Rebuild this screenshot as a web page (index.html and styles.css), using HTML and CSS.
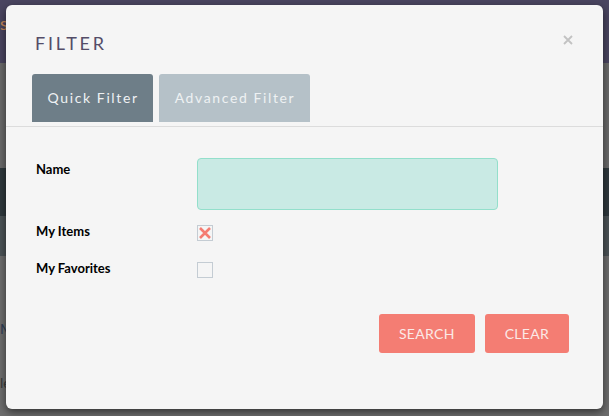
FILE: index.html
```html
<!DOCTYPE html>
<html lang="en">
<head>
<meta charset="utf-8">
<title>Filter</title>
<link rel="stylesheet" href="styles.css">
</head>
<body>
<div class="backdrop">
  <div class="band band-nav"><span class="peek peek-orange">s</span></div>
  <div class="band band-grey"></div>
  <div class="band band-dark"></div>
  <div class="band band-mid"></div>
  <div class="band band-rest">
    <span class="peek peek-m">M</span>
    <span class="peek peek-le">le</span>
  </div>
</div>

<div class="modal">
  <div class="modal-header">
    <h1 class="modal-title">FILTER</h1>
    <button class="close" aria-label="Close">
      <svg width="10" height="10" viewBox="0 0 10 10"><path d="M1 1L9 9M9 1L1 9" stroke="#c2c2c2" stroke-width="1.8" fill="none"/></svg>
    </button>
  </div>
  <div class="tabs">
    <div class="tab tab-active">Quick Filter</div>
    <div class="tab">Advanced Filter</div>
  </div>
  <div class="modal-body">
    <div class="row row-name">
      <label class="label">Name</label>
      <div class="field"><div class="text-input"></div></div>
    </div>
    <div class="row row-items">
      <label class="label">My Items</label>
      <div class="field">
        <span class="checkbox">
          <svg width="16" height="16" viewBox="0 0 16 16"><path d="M3 3L13 13M13 3L3 13" stroke="#f47c72" stroke-width="2.6" fill="none"/></svg>
        </span>
      </div>
    </div>
    <div class="row row-fav">
      <label class="label">My Favorites</label>
      <div class="field"><span class="checkbox"></span></div>
    </div>
    <div class="actions">
      <button class="btn">SEARCH</button>
      <button class="btn">CLEAR</button>
    </div>
  </div>
</div>
</body>
</html>
```

FILE: styles.css
```css
* { box-sizing: border-box; }
html, body {
  margin: 0;
  padding: 0;
  width: 609px;
  height: 416px;
  overflow: hidden;
  font-family: Lato, "Open Sans", sans-serif;
}
body { background: #6f6f6f; }

.backdrop {
  display: flex;
  flex-direction: column;
  height: 416px;
}
.band { width: 100%; position: relative; overflow: hidden; }
.band-nav { height: 63px; background: #4a4560; }
.band-grey { height: 105px; background: #6a6a6a; }
.band-dark { height: 48px; background: #2f393d; }
.band-mid { height: 40px; background: #4b5356; }
.band-rest { flex: 1; background: #6d6d6d; }

.peek { position: absolute; left: 0; font-size: 14px; }
.peek-orange { top: 12px; color: #c98a5a; font-size: 18px; }
.peek-m { top: 64px; color: #2f3d55; }
.peek-le { top: 118px; color: #3a3a3a; }

.modal {
  position: absolute;
  left: 6px;
  top: 5px;
  width: 597px;
  height: 404px;
  background: #f5f5f5;
  border-radius: 6px;
  box-shadow: 0 3px 9px rgba(0, 0, 0, 0.55);
}

.modal-header {
  display: flex;
  justify-content: space-between;
  align-items: flex-start;
  padding: 28px 30px 0 29px;
}
.modal-title {
  margin: 0;
  font-size: 18px;
  line-height: 20px;
  font-weight: 400;
  letter-spacing: 2.8px;
  color: #544d68;
}
.close {
  margin-top: 2px;
  padding: 0;
  border: 0;
  background: none;
  width: 10px;
  height: 10px;
  display: block;
}
.close svg { display: block; }

.tabs {
  display: flex;
  gap: 6px;
  margin-top: 21px;
  padding: 0 0 4px 26px;
  border-bottom: 1px solid #dcdcdc;
}
.tab {
  height: 48px;
  line-height: 48px;
  padding: 0 14.5px 0 15.5px;
  font-size: 14px;
  letter-spacing: 1.62px;
  color: #eef1f3;
  background: #b5c1c8;
  border-radius: 3px 3px 0 0;
}
.tab-active { background: #6e7e88; }

.modal-body {
  padding: 31px 34px 0 30px;
}
.row {
  display: grid;
  grid-template-columns: 161px 1fr;
  align-items: start;
}
.label {
  font-size: 13px;
  line-height: 16px;
  font-weight: 700;
  color: #000;
}
.row-name .label { margin-top: 3px; }
.row-items .label, .row-fav .label { margin-top: 1px; }
.row-items { margin-top: 12px; }
.row-fav { margin-top: 18px; }
.row-items .field, .row-fav .field { padding-top: 3px; }

.text-input {
  width: 301px;
  height: 52px;
  background: #c9eae4;
  border: 1px solid #93dfcb;
  border-radius: 4px;
}
.checkbox {
  display: block;
  width: 16px;
  height: 16px;
  border: 1px solid #c4ccd3;
  background: #f5f5f5;
  position: relative;
}
.checkbox svg {
  position: absolute;
  left: -1px;
  top: -1px;
}

.actions {
  display: flex;
  justify-content: flex-end;
  gap: 10px;
  margin-top: 36px;
}
.btn {
  height: 39px;
  padding: 0 20px 0 20px;
  border: 0;
  border-radius: 3px;
  background: #f47d73;
  color: #fbe9e7;
  font-family: Lato, "Open Sans", sans-serif;
  font-size: 14px;
  letter-spacing: 0.3px;
}
```
